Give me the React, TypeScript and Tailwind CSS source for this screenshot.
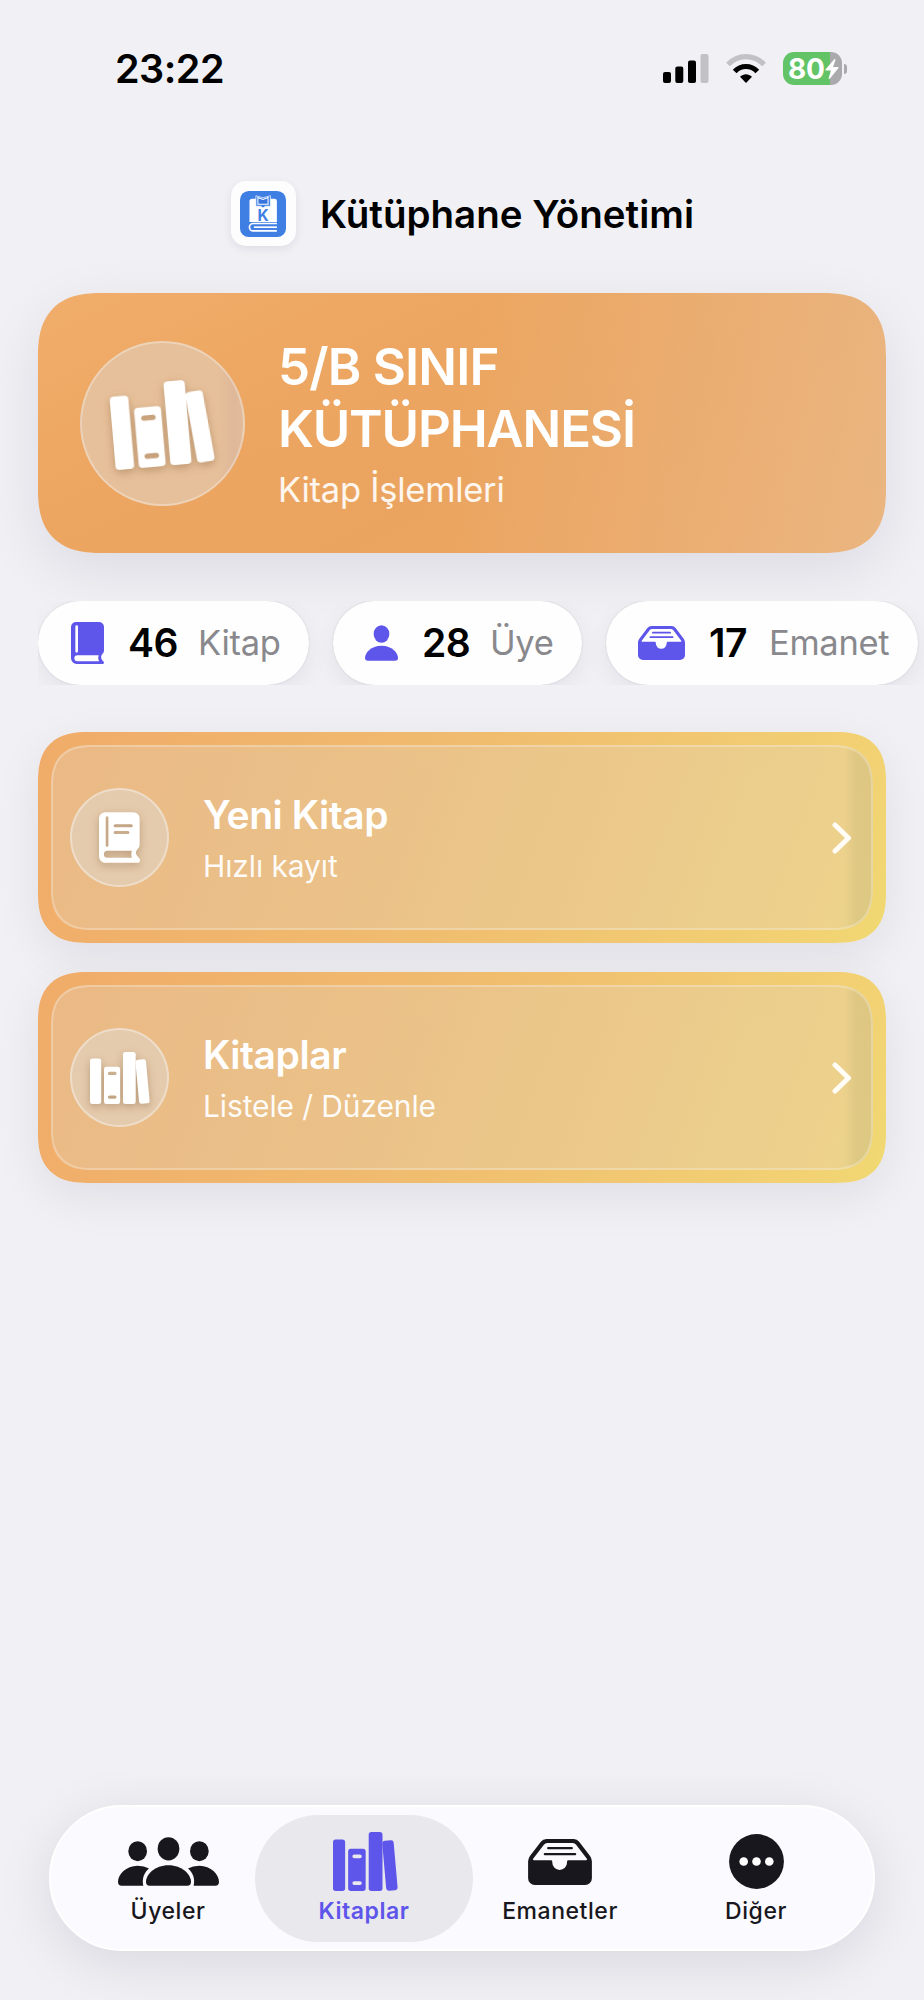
import type { ReactNode } from 'react';
import clsx from 'clsx';

type IconProps = { className?: string };

function BooksIcon({ className }: IconProps) {
  return (
    <svg viewBox="0 0 193 176" preserveAspectRatio="none" fill="currentColor" className={className} aria-hidden="true">
      <rect x="0" y="22" width="36" height="154" rx="8" />
      <path
        fillRule="evenodd"
        d="M53 50H89a8 8 0 0 1 8 8V168a8 8 0 0 1-8 8H53a8 8 0 0 1-8-8V58a8 8 0 0 1 8-8ZM63 67a5.500 5.500 0 0 0 0 11H80a5.500 5.500 0 0 0 0-11ZM63 147a5.500 5.500 0 0 0 0 11H80a5.500 5.500 0 0 0 0-11Z"
      />
      <rect x="106" y="0" width="41" height="176" rx="8" />
      <rect x="152" y="25" width="34" height="150" rx="8" transform="rotate(-5 168 100)" />
    </svg>
  );
}

function BookIcon({ className }: IconProps) {
  return (
    <svg viewBox="0 0 99 126" fill="currentColor" className={className} aria-hidden="true">
      <path
        fillRule="evenodd"
        d="M15 0H84a15 15 0 0 1 15 15V86q0 6-5 10c-5 6-5 14 1 20q4 3 4 6q0 4-5 4H17A17 17 0 0 1 0 109V15A15 15 0 0 1 15 0ZM19 100a9 9 0 0 0 0 18H84q-5-9-1-18ZM17 10a4 4 0 0 0-4 4V88a4 4 0 0 0 8 0V14a4 4 0 0 0-4-4Z"
      />
    </svg>
  );
}

function TextBookIcon({ className }: IconProps) {
  return (
    <svg viewBox="0 0 122 151" fill="currentColor" className={className} aria-hidden="true">
      <path
        fillRule="evenodd"
        d="M19 0H102a19 19 0 0 1 19 19V97q0 6-5 12c-8 8-8 16 0 24q6 5 6 10q0 8-7 8H21A20 20 0 0 1 0 130V19A19 19 0 0 1 19 0ZM25 115a10.500 10.500 0 0 0 0 21H98q-4-11 0-21ZM24 12a4 4 0 0 0-4 4V99a4 4 0 0 0 8 0V16a4 4 0 0 0-4-4ZM48 36a4.500 4.500 0 0 0 0 9H96a4.500 4.500 0 0 0 0-9ZM48 56a4.500 4.500 0 0 0 0 9H86a4.500 4.500 0 0 0 0-9Z"
      />
    </svg>
  );
}

function PersonIcon({ className }: IconProps) {
  return (
    <svg viewBox="0 0 99 106" fill="currentColor" className={className} aria-hidden="true">
      <ellipse cx="49.500" cy="26" rx="23.500" ry="26" />
      <path d="M0 98C0 82 18 61 49.500 61s49.500 21 49.500 37q0 8-9 8H9Q0 106 0 98Z" />
    </svg>
  );
}

function TrayIcon({ className }: IconProps) {
  return (
    <svg viewBox="0 0 190 137" className={className} aria-hidden="true">
      <path
        fill="currentColor"
        fillRule="evenodd"
        d="M55 0H136q10 0 16 8l32 42q6 8 6 16V117a20 20 0 0 1-20 20H20A20 20 0 0 1 0 117V66q0-8 6-16L38 8q6-8 17-8ZM57 12q-6 0-10 5L15 59q-2 4 2 4H68q4 0 4 4v3a22 22 0 0 0 44 0v-3q0-4 4-4H173q4 0 2-4L143 17q-4-5-10-5Z"
      />
      <path d="M60 27H130M50 45H140" stroke="currentColor" strokeWidth="7" strokeLinecap="round" />
    </svg>
  );
}

function PeopleIcon({ className }: IconProps) {
  return (
    <svg viewBox="0 0 303 146" fill="currentColor" className={className} aria-hidden="true">
      <ellipse cx="151.500" cy="35" rx="32.500" ry="35" />
      <ellipse cx="59" cy="42" rx="28" ry="30" />
      <ellipse cx="244" cy="42" rx="28" ry="30" />
      <path d="M84 134C84 112 110 84 151.500 84s67.500 28 67.500 50q0 12-11 12H95q-11 0-11-12Z" />
      <path d="M0 134C0 112 24 86 59 86q20 0 34 8C79 105 71 124 76 146H11Q0 146 0 134Z" />
      <path d="M303 134C303 112 279 86 244 86q-20 0-34 8c14 11 22 30 17 52h65q11 0 11-12Z" />
    </svg>
  );
}

function MoreIcon({ className }: IconProps) {
  return (
    <svg viewBox="0 0 55 55" className={className} aria-hidden="true">
      <circle cx="27.500" cy="27.500" r="27.400" fill="currentColor" />
      <g fill="#fff">
        <circle cx="14.700" cy="27.500" r="4.300" />
        <circle cx="27.500" cy="27.500" r="4.300" />
        <circle cx="40.300" cy="27.500" r="4.300" />
      </g>
    </svg>
  );
}

function AppLogo() {
  return (
    <svg viewBox="0 0 136 136" className="h-[46px] w-[46px]" aria-hidden="true">
      <rect width="136" height="136" rx="26" fill="#3f7fe4" />
      <path d="M36 23H102a7 7 0 0 1 7 7V92H28V31a8 8 0 0 1 8-8Z" fill="#fff" />
      <path d="M109 96H39a11 11 0 0 0 0 22H109" fill="none" stroke="#fff" strokeWidth="5" />
      <path d="M41 107H109" stroke="#fff" strokeWidth="5" />
      <path d="M47 14L68 20L90 14V45H75L68 50L61 45H47Z" fill="#3f7fe4" stroke="#fff" strokeWidth="2" />
      <path d="M53 19L68 25L83 19V39H53Z" fill="#3874da" stroke="#fff" strokeWidth="3" />
      <text x="68" y="89" textAnchor="middle" fontSize="46" fontWeight="700" fontFamily="Inter, sans-serif" fill="#3f7fe4">
        K
      </text>
    </svg>
  );
}

function StatusBar() {
  return (
    <div className="flex h-[137px] shrink-0 items-center pl-[115px] pr-[77px]">
      <span className="pt-[2px] text-[39.500px] font-semibold tracking-[-0.500px]">23:22</span>
      <div className="ml-auto flex items-center">
        <svg viewBox="0 0 46 29" className="h-[29px] w-[46px]" aria-hidden="true">
          <rect x="0" y="18" width="8" height="11" rx="2" />
          <rect x="12.300" y="12.500" width="8" height="16.500" rx="2" />
          <rect x="25" y="6.500" width="8" height="22.500" rx="2" />
          <rect x="37.500" y="0" width="8" height="29" rx="2" fill="#c2c1c6" />
        </svg>
        <svg viewBox="0 0 40 29" className="ml-[17px] h-[29px] w-10" fill="none" aria-hidden="true">
          <path d="M2 10.500C12 0 28 0 38 10.500" stroke="#c2c1c6" strokeWidth="5.200" />
          <path d="M8.700 17.500C15 10.800 25 10.800 31.300 17.500" stroke="#000" strokeWidth="5.200" />
          <path d="M20 29L14 22.800C17.500 19.300 22.500 19.300 26 22.800Z" fill="#000" />
        </svg>
        <div className="relative ml-[17px] flex h-[33px] w-[59px] items-center overflow-hidden rounded-[11px] bg-[linear-gradient(to_right,#62c466_47px,#aaaaad_47px)] pl-[5px] text-white">
          <span className="text-[28px] font-bold leading-none tracking-[-0.300px]">80</span>
          <svg viewBox="0 0 14 20" className="absolute left-[42px] top-[7px] h-[20px] w-[14px]" fill="currentColor" aria-hidden="true">
            <path d="M9.500 0L0.500 10.500Q0 11.500 1 11.500H6L3.500 19.500Q4 20.300 5 19.500L13.500 9Q14 8 13 8H8L10.500 0.800Q10.300-0.300 9.500 0Z" />
          </svg>
        </div>
        <div className="ml-[2px] h-[10px] w-[3px] rounded-r-full bg-[#aaaaad]" />
      </div>
    </div>
  );
}

function HeroCard() {
  return (
    <section className="mt-[47px] flex h-[260px] shrink-0 items-center rounded-[54px] supports-[corner-shape:squircle]:rounded-[64px] supports-[corner-shape:squircle]:[corner-shape:superellipse(1.35)] bg-[linear-gradient(105deg,transparent_48%,rgba(233,193,152,0.62)_100%),linear-gradient(155deg,#f1ad6b_0%,#eca661_35%,#eba45f_60%,#eda35c_100%)] pl-[42px] text-white shadow-[0_18px_60px_rgba(10,8,30,0.085)]">
      <div className="flex h-[165px] w-[165px] items-center justify-center rounded-full border-2 border-white/30 bg-[linear-gradient(to_right,#e6c09a_84%,#dfb89a_94%,#e2bb9a)]">
        <BooksIcon className="mr-[2px] mt-[2px] h-[84px] w-[100px] -rotate-5 drop-shadow-[0_3px_4px_rgba(90,50,10,0.3)]" />
      </div>
      <div className="ml-[33px]">
        <h2 className="text-[51px] font-semibold leading-[62px] tracking-[-1.150px]">
          <span className="tracking-[-0.800px]">5/B SINIF</span>
          <br />
          KÜTÜPHANESİ
        </h2>
        <p className="mt-[9px] text-[34.500px] leading-[42px] tracking-[-0.250px] text-white/90">Kitap İşlemleri</p>
      </div>
    </section>
  );
}

type ChipProps = { icon: ReactNode; value: string; label: string; className: string; valueClassName: string };

function StatChip({ icon, value, label, className, valueClassName }: ChipProps) {
  return (
    <div
      className={clsx(
        'flex h-[84px] shrink-0 items-center rounded-full bg-[#fefefe] shadow-[0_8px_24px_rgba(10,8,30,0.06),0_0_2px_rgba(0,0,0,0.14)]',
        className
      )}
    >
      <span className="text-[#5e55ea]">{icon}</span>
      <span className={clsx('ml-[24px] mr-[20px] text-[39px] font-semibold tracking-[-0.500px]', valueClassName)}>
        {value}
      </span>
      <span className="text-[34.500px] tracking-[-0.300px] text-[#89898d]">{label}</span>
    </div>
  );
}

type ActionProps = { icon: ReactNode; title: string; subtitle: string };

function ActionCard({ icon, title, subtitle }: ActionProps) {
  return (
    <button className="block h-[211px] w-full shrink-0 rounded-[44px] supports-[corner-shape:squircle]:rounded-[50px] supports-[corner-shape:squircle]:[corner-shape:superellipse(1.35)] bg-[linear-gradient(110deg,#f0ab69_0%,#f0bd6f_50%,#f2d273_92%,#f0d972_100%)] p-[13px] text-left text-white shadow-[0_14px_48px_rgba(10,8,30,0.075)]">
      <div className="flex h-[185px] items-center rounded-[36px] supports-[corner-shape:squircle]:rounded-[42px] supports-[corner-shape:squircle]:[corner-shape:superellipse(1.35)] border-2 border-white/25 bg-[linear-gradient(to_right,transparent_793px,rgba(110,110,60,0.11)_806px),linear-gradient(rgba(226,209,185,0.36),rgba(226,209,185,0.36))] bg-origin-border pl-[17px] pr-[19px]">
        <div className="flex h-[99px] w-[99px] items-center justify-center rounded-full border-2 border-white/35 bg-[#e5cbad]">
          {icon}
        </div>
        <div className="ml-[34px]">
          <h3 className="text-[39px] font-semibold leading-[48px] tracking-[-0.450px]">{title}</h3>
          <p className="mt-[9px] text-[30px] leading-[37px] tracking-[-0.120px] text-white/95">{subtitle}</p>
        </div>
        <svg viewBox="0 0 20 32" className="ml-auto h-8 w-5" fill="none" stroke="#fffdf5" strokeWidth="5" strokeLinecap="round" strokeLinejoin="round" aria-hidden="true">
          <path d="M3 3L16.500 16L3 29" />
        </svg>
      </div>
    </button>
  );
}

type TabProps = { icon: ReactNode; label: string; active?: boolean; className: string };

function TabItem({ icon, label, active, className }: TabProps) {
  return (
    <button
      className={clsx(
        'flex h-[127px] flex-col items-center rounded-full pt-[17px]',
        active ? 'bg-[#e9e8ed] font-semibold text-[#5e55ea]' : 'font-medium text-[#18171d]',
        className
      )}
    >
      <span className="flex h-[60px] items-center">{icon}</span>
      <span className="mt-[5px] text-[23px] leading-[28px] tracking-[0.550px]">{label}</span>
    </button>
  );
}

export default function App() {
  return (
    <div className="flex h-[2000px] w-[924px] flex-col overflow-hidden bg-[#f1f0f5] font-['Inter','Liberation_Sans',sans-serif] text-black">
      <StatusBar />

      <header className="mt-[44px] flex h-[65px] shrink-0 items-center justify-center pl-px">
        <div className="flex h-[65px] w-[65px] items-center justify-center rounded-[15px] bg-[#fdfdfe] shadow-[0_3px_10px_rgba(20,15,50,0.08)]">
          <AppLogo />
        </div>
        <h1 className="ml-[24px] pt-[2px] text-[38.500px] font-semibold">Kütüphane Yönetimi</h1>
      </header>

      <main className="flex flex-col px-[38px]">
        <HeroCard />

        <div className="-mr-[38px] mt-[48px] flex h-[84px] shrink-0 gap-[24px] overflow-hidden">
          <StatChip
            className="w-[271px] pl-[33px]"
            icon={<BookIcon className="h-[42px] w-[33px]" />}
            value="46"
            valueClassName="w-[50px]"
            label="Kitap"
          />
          <StatChip
            className="w-[249px] pl-[32px]"
            icon={<PersonIcon className="h-[36px] w-[33px]" />}
            value="28"
            valueClassName="w-[48px]"
            label="Üye"
          />
          <StatChip
            className="w-[312px] pl-[32px]"
            icon={<TrayIcon className="h-[34px] w-[47px]" />}
            value="17"
            valueClassName="w-[40px]"
            label="Emanet"
          />
        </div>

        <div className="mt-[47px] flex flex-col gap-[29px]">
          <ActionCard
            icon={<TextBookIcon className="h-[51px] w-[41px] drop-shadow-[0_3px_4px_rgba(90,50,10,0.3)]" />}
            title="Yeni Kitap"
            subtitle="Hızlı kayıt"
          />
          <ActionCard
            icon={<BooksIcon className="h-[52px] w-[60px] drop-shadow-[0_3px_4px_rgba(90,50,10,0.3)]" />}
            title="Kitaplar"
            subtitle="Listele / Düzenle"
          />
        </div>
      </main>

      <nav className="mx-[49px] mb-[49px] mt-auto flex h-[146px] shrink-0 items-center rounded-full border-2 border-white bg-[#fbfaff] pl-[18px] shadow-[0_12px_56px_rgba(10,8,30,0.1)]">
        <TabItem className="w-[198px]" icon={<PeopleIcon className="h-[49px] w-[101px]" />} label="Üyeler" />
        <TabItem className="w-[218px] -ml-[12px]" active icon={<BooksIcon className="ml-[2px] h-[59px] w-[65px]" />} label="Kitaplar" />
        <TabItem className="w-[174px]" icon={<TrayIcon className="h-[46px] w-[64px]" />} label="Emanetler" />
        <TabItem className="w-[218px]" icon={<MoreIcon className="h-[55px] w-[55px]" />} label="Diğer" />
      </nav>
    </div>
  );
}
